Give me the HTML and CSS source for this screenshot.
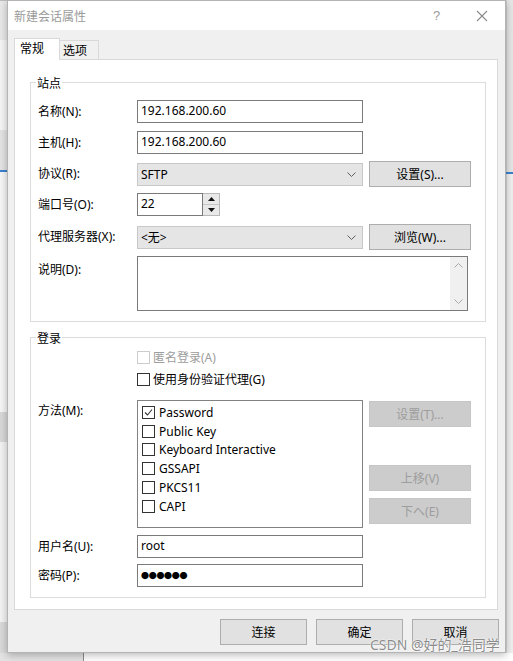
FILE: index.html
```html
<!DOCTYPE html>
<html lang="zh-CN">
<head>
<meta charset="utf-8">
<title>新建会话属性</title>
<link rel="stylesheet" href="styles.css">
</head>
<body>
<div class="desktop">
  <div class="bg-left">
    <div class="bl-a"></div>
    <div class="bl-b"></div>
    <div class="bl-c"></div>
    <div class="bl-d"></div>
    <div class="bl-e"></div>
    <div class="bl-f"></div>
    <div class="bl-g"></div>
  </div>
  <div class="bg-right">
    <div class="br-a"></div>
    <div class="br-b"></div>
    <div class="br-c"></div>
  </div>
  <div class="bg-bottom"><div class="bb-left"></div></div>

  <div class="dialog">
    <div class="titlebar">
      <span class="title">新建会话属性</span>
      <span class="help">?</span>
      <span class="close"><svg width="12" height="12" viewBox="0 0 12 12"><path d="M1 1 L11 11 M11 1 L1 11" stroke="#8a8a8a" stroke-width="1.1" fill="none"/></svg></span>
    </div>
    <div class="dbody">
      <div class="tabs">
        <div class="tab active">常规</div>
        <div class="tab inactive">选项</div>
      </div>
      <div class="panel">
        <div class="group g1">
          <span class="legend">站点</span>
          <div class="row r1"><span class="lbl">名称(N):</span><div class="input">192.168.200.60</div></div>
          <div class="row r2"><span class="lbl">主机(H):</span><div class="input">192.168.200.60</div></div>
          <div class="row r3"><span class="lbl">协议(R):</span>
            <div class="select"><span>SFTP</span><svg class="chev" width="9" height="5" viewBox="0 0 9 5"><path d="M0.5 0.5 L4.5 4.5 L8.5 0.5" stroke="#606060" fill="none"/></svg></div>
            <div class="btn side">设置(S)...</div>
          </div>
          <div class="row r4"><span class="lbl">端口号(O):</span>
            <div class="input port">22</div>
            <div class="spin">
              <div class="spin-btn"><svg width="7" height="4" viewBox="0 0 7 4"><path d="M0 4 L3.5 0 L7 4 Z" fill="#111"/></svg></div>
              <div class="spin-btn"><svg width="7" height="4" viewBox="0 0 7 4"><path d="M0 0 L3.5 4 L7 0 Z" fill="#111"/></svg></div>
            </div>
          </div>
          <div class="row r5"><span class="lbl">代理服务器(X):</span>
            <div class="select"><span>&lt;无&gt;</span><svg class="chev" width="9" height="5" viewBox="0 0 9 5"><path d="M0.5 0.5 L4.5 4.5 L8.5 0.5" stroke="#606060" fill="none"/></svg></div>
            <div class="btn side">浏览(W)...</div>
          </div>
          <div class="row r6"><span class="lbl top6">说明(D):</span>
            <div class="textarea">
              <div class="ta-text"></div>
              <div class="vscroll">
                <svg width="9" height="5" viewBox="0 0 9 5"><path d="M0.5 4.5 L4.5 0.5 L8.5 4.5" stroke="#a8a8a8" fill="none"/></svg>
                <svg width="9" height="5" viewBox="0 0 9 5"><path d="M0.5 0.5 L4.5 4.5 L8.5 0.5" stroke="#a8a8a8" fill="none"/></svg>
              </div>
            </div>
          </div>
        </div>

        <div class="group g2">
          <span class="legend">登录</span>
          <div class="row cbrow c1"><span class="lbl"></span><span class="cb disabled"></span><span class="cbtext disabled-text">匿名登录(A)</span></div>
          <div class="row cbrow c2"><span class="lbl"></span><span class="cb"></span><span class="cbtext">使用身份验证代理(G)</span></div>
          <div class="row r-method"><span class="lbl top3">方法(M):</span>
            <div class="listbox">
              <div class="item"><span class="cb"><svg width="11" height="11" viewBox="0 0 11 11"><path d="M2 5.5 L4.5 8 L9 2.5" stroke="#333" stroke-width="1.1" fill="none"/></svg></span><span class="itext">Password</span></div>
              <div class="item"><span class="cb"></span><span class="itext">Public Key</span></div>
              <div class="item"><span class="cb"></span><span class="itext">Keyboard Interactive</span></div>
              <div class="item"><span class="cb"></span><span class="itext">GSSAPI</span></div>
              <div class="item"><span class="cb"></span><span class="itext">PKCS11</span></div>
              <div class="item"><span class="cb"></span><span class="itext">CAPI</span></div>
            </div>
            <div class="mbtns">
              <div class="btn side dis">设置(T)...</div>
              <div class="btn side dis b-up">上移(V)</div>
              <div class="btn side dis b-down">下へ(E)</div>
            </div>
          </div>
          <div class="row r-user"><span class="lbl">用户名(U):</span><div class="input">root</div></div>
          <div class="row r-pwd"><span class="lbl">密码(P):</span><div class="input pwd">●●●●●●</div></div>
        </div>
      </div>
      <div class="actions">
        <div class="btn act">连接</div>
        <div class="btn act">确定</div>
        <div class="btn act">取消</div>
      </div>
    </div>
  </div>
  <div class="watermark">CSDN @好的_浩同学</div>
</div>
</body>
</html>
```

FILE: styles.css
```css
* { box-sizing: border-box; }
html, body { margin: 0; padding: 0; }
body {
  width: 513px;
  height: 661px;
  overflow: hidden;
  background: #ffffff;
  font-family: "Noto Sans", "Noto Sans CJK SC", sans-serif;
  font-size: 12px;
  color: #000;
}
.desktop {
  position: relative;
  width: 513px;
  height: 661px;
  background: #fbfbfb;
}

/* background app fragments */
.bg-left {
  position: absolute;
  left: 0; top: 0;
  width: 7px; height: 661px;
  display: flex;
  flex-direction: column;
}
.bl-a { height: 40px; background: #e9e9e9; border-top: 1px solid #bdbdbd; }
.bl-b { height: 90px; background: #f6f6f6; }
.bl-c { height: 42px; background: #e4e4e4; border-bottom: 2px solid #3b83d1; }
.bl-d { height: 240px; background: #f7f7f7; }
.bl-e { height: 30px; background: #d9d9d9; }
.bl-f { height: 180px; background: #f4f4f4; }
.bl-g { flex: 1; background: #dadada; }

.bg-right {
  position: absolute;
  right: 0; top: 0;
  width: 8px; height: 661px;
  display: flex;
  flex-direction: column;
  background: #ececec;
}
.br-a { height: 172px; border-left: 2px solid #cfcfcf; background: #e6e6e6; }
.br-b { height: 2px; background: #3b83d1; }
.br-c { flex: 1; background: #f0f0f0; border-left: 2px solid #d6d6d6; }

.bg-bottom {
  position: absolute;
  left: 0; bottom: 0;
  width: 513px; height: 8px;
  background: #ffffff;
}
.bb-left { width: 84px; height: 8px; background: #e3e3e3; border-right: 1px solid #8c8c8c; }

/* dialog window */
.dialog {
  position: absolute;
  left: 7px; top: 0;
  width: 499px; height: 653px;
  border: 1px solid #b4b4b4;
  background: #f0f0f0;
  box-shadow: 0 2px 8px rgba(0,0,0,0.28);
  display: flex;
  flex-direction: column;
}
.titlebar {
  height: 29px;
  background: #ffffff;
  display: flex;
  align-items: center;
  padding-left: 6px;
}
.title { color: #9a9a9a; font-size: 12px; flex: 1; }
.help {
  width: 45px;
  text-align: center;
  color: #9a9a9a;
  font-family: "Liberation Sans", sans-serif;
  font-size: 13px;
}
.close {
  width: 46px;
  display: flex;
  justify-content: center;
  align-items: center;
}

.dbody {
  flex: 1;
  padding: 8px 7px 0 6px;
  display: flex;
  flex-direction: column;
}
.tabs {
  display: flex;
  align-items: flex-end;
  height: 21px;
}
.tab {
  font-size: 12px;
  line-height: 18px;
}
.tab.active {
  position: relative;
  z-index: 1;
  width: 46px;
  height: 22px;
  margin-bottom: -1px;
  background: #fff;
  border: 1px solid #d9d9d9;
  border-bottom: none;
  padding: 1px 0 0 5px;
}
.tab.inactive {
  width: 39px;
  height: 19px;
  border: 1px solid #d9d9d9;
  border-left: none;
  border-bottom: none;
  padding: 1px 0 0 3px;
  background: #f0f0f0;
}
.panel {
  width: 484px;
  height: 551px;
  background: #fff;
  border: 1px solid #d9d9d9;
  padding: 22px 11px 11px 15px;
}

.group {
  position: relative;
  border: 1px solid #dcdcdc;
  padding-left: 7px;
}
.g1 { height: 240px; padding-top: 17px; }
.g2 { height: 261px; padding-top: 11px; margin-top: 15px; }
.legend {
  position: absolute;
  top: -7px;
  left: 5px;
  background: #fff;
  padding: 0 1px;
  line-height: 16px;
}

.row { display: flex; align-items: center; }
.lbl { width: 99px; flex-shrink: 0; line-height: 16px; }
.top6 { align-self: flex-start; padding-top: 6px; }
.top3 { align-self: flex-start; padding-top: 3px; }

.r1 { height: 23px; }
.r2 { height: 23px; margin-top: 8px; }
.r3 { height: 26px; margin-top: 7px; }
.r4 { height: 23px; margin-top: 6px; }
.r5 { height: 26px; margin-top: 8px; }
.r6 { height: 55px; margin-top: 6px; align-items: flex-start; }

.input {
  width: 226px;
  height: 23px;
  border: 1px solid #7a7a7a;
  background: #fff;
  padding-left: 3px;
  line-height: 20px;
  font-size: 12px;
}
.input.port { width: 66px; }
.input.pwd { font-size: 8px; letter-spacing: -0.3px; line-height: 21px; padding-left: 3px; }

.spin {
  width: 17px;
  height: 23px;
  display: flex;
  flex-direction: column;
  border: 1px solid #b9b9b9;
  border-left: none;
  background: #e9e9e9;
}
.spin-btn {
  flex: 1;
  display: flex;
  align-items: center;
  justify-content: center;
}
.spin-btn + .spin-btn { border-top: 1px solid #c6c6c6; }

.select {
  width: 226px;
  height: 23px;
  background: #e5e5e5;
  border: 1px solid #c8c8c8;
  display: flex;
  align-items: center;
  justify-content: space-between;
  padding: 0 6px 0 3px;
}

.btn {
  height: 26px;
  background: #e1e1e1;
  border: 1px solid #adadad;
  display: flex;
  align-items: center;
  justify-content: center;
  font-size: 12px;
}
.btn.side { width: 102px; margin-left: 6px; }
.btn.dis { background: #cccccc; border-color: #c6c6c6; color: #9d9d9d; }

.textarea {
  width: 331px;
  height: 55px;
  border: 1px solid #7a7a7a;
  background: #fff;
  display: flex;
}
.ta-text { flex: 1; }
.vscroll {
  width: 17px;
  background: #f0f0f0;
  display: flex;
  flex-direction: column;
  justify-content: space-between;
  align-items: center;
  padding: 6px 0 6px;
}

.cbrow { height: 17px; }
.c1 { margin-top: 0; }
.c2 { margin-top: 5px; }
.cb {
  width: 13px;
  height: 13px;
  border: 1px solid #333;
  background: #fff;
  flex-shrink: 0;
  display: flex;
  align-items: center;
  justify-content: center;
}
.cb.disabled { border-color: #cccccc; }
.cbtext { margin-left: 3px; line-height: 16px; }
.disabled-text { color: #9d9d9d; }

.r-method { margin-top: 12px; height: 128px; align-items: flex-start; }
.listbox {
  width: 226px;
  height: 128px;
  border: 1px solid #828282;
  padding: 2px 0 0 4px;
  background: #fff;
}
.item {
  height: 18.8px;
  display: flex;
  align-items: center;
}
.itext { margin-left: 4px; font-size: 12px; }
.mbtns {
  display: flex;
  flex-direction: column;
  padding-top: 1px;
}
.b-up { margin-top: 38px; }
.b-down { margin-top: 7px; }

.r-user { margin-top: 7px; height: 23px; }
.r-pwd { margin-top: 6px; height: 23px; }

.actions {
  display: flex;
  justify-content: flex-end;
  gap: 9px;
  margin-top: 9px;
  margin-right: -1px;
}
.btn.act { width: 87px; }

.watermark {
  position: absolute;
  left: 370px;
  top: 636px;
  font-size: 14px;
  line-height: 18px;
  color: rgba(120,120,120,0.85);
  text-shadow: 0 0 2px #fff, 0 0 1px #fff;
  white-space: nowrap;
}
```
